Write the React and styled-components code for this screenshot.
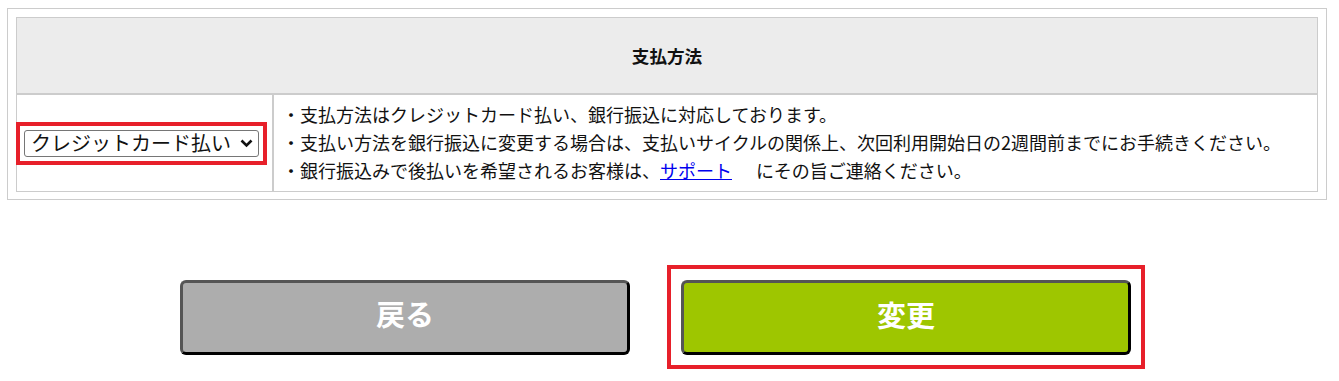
import React from 'react'
import styled, { createGlobalStyle } from 'styled-components'

const GlobalStyle = createGlobalStyle`
    body {
        margin: 0;
        background: #fff;
        color: #111;
        font-family: "Noto Sans CJK JP", "Noto Sans", sans-serif;
    }
`

const Page = styled.div`
    padding: 8px 12px 0 7px;
`

const Panel = styled.div`
    border: 1px solid #cccccc;
    padding: 8px 8px 7px 8px;
`

const Table = styled.table`
    width: 100%;
    border-collapse: collapse;
`

const HeadCell = styled.th`
    height: 75px;
    padding: 0;
    background: #ececec;
    border: 1px solid #cccccc;
    border-bottom-width: 2px;
    font-size: 17.6px;
    font-weight: bold;
    text-align: center;
`

const SelectCell = styled.td`
    width: 255px;
    padding: 0;
    border: 1px solid #cccccc;
    border-right-width: 2px;
    vertical-align: middle;
`

const NoteCell = styled.td`
    padding: 5px 8px 7px 8px;
    border: 1px solid #cccccc;
    font-size: 18px;
    line-height: 28px;
`

const Mark = styled.div`
    display: inline-block;
    border: 4px solid #e7202a;
    padding: 4px 4px 4px 4px;
    margin-left: -1px;
`

const SelectBox = styled.div`
    position: relative;
    width: 235px;
    height: 27px;
`

const Select = styled.select`
    appearance: none;
    display: block;
    width: 100%;
    height: 100%;
    padding: 0 24px 2px 6px;
    border: 1px solid #767676;
    border-radius: 3px;
    background: #fff;
    color: #111;
    font-family: "Noto Sans CJK JP", sans-serif;
    font-size: 20px;
    line-height: 24px;
`

const Chevron = styled.svg`
    position: absolute;
    right: 6px;
    top: 9px;
    pointer-events: none;
`

const Link = styled.a`
    color: #0000ee;
    text-decoration: underline;
    margin-right: 24px;
`

const Actions = styled.div`
    display: flex;
    justify-content: center;
    align-items: center;
    gap: 37px;
    margin-top: 65px;
    padding-right: 9px;
`

const Frame = styled.div`
    border: 4px solid #e7202a;
    padding: 11px 10px 10px 10px;
`

const Button = styled.button`
    display: flex;
    justify-content: center;
    align-items: center;
    width: 450px;
    height: 75px;
    padding: 0 0 8px 0;
    border: 3px solid;
    border-color: #555 #000 #000 #555;
    border-radius: 6px;
    background: ${props => props.$primary ? '#9ec600' : '#adadad'};
    color: #fff;
    font-family: "Noto Sans CJK JP", sans-serif;
    font-size: 29px;
    font-weight: bold;
    cursor: pointer;
`

const notes = [
    '・支払方法はクレジットカード払い、銀行振込に対応しております。',
    '・支払い方法を銀行振込に変更する場合は、支払いサイクルの関係上、次回利用開始日の2週間前までにお手続きください。',
]

export default function App() {
    return (
        <Page>
            <GlobalStyle />
            <Panel>
                <Table>
                    <thead>
                        <tr>
                            <HeadCell colSpan={2}>支払方法</HeadCell>
                        </tr>
                    </thead>
                    <tbody>
                        <tr>
                            <SelectCell>
                                <Mark>
                                    <SelectBox>
                                        <Select defaultValue="card">
                                            <option value="card">クレジットカード払い</option>
                                            <option value="bank">銀行振込</option>
                                        </Select>
                                        <Chevron width="13" height="9" viewBox="0 0 13 9">
                                            <path d="M1.5 1.5 L6.5 6.5 L11.5 1.5" fill="none" stroke="#111" strokeWidth="2.6" />
                                        </Chevron>
                                    </SelectBox>
                                </Mark>
                            </SelectCell>
                            <NoteCell>
                                {notes.map(note => (
                                    <div key={note}>{note}</div>
                                ))}
                                <div>
                                    ・銀行振込みで後払いを希望されるお客様は、<Link href="#">サポート</Link>にその旨ご連絡ください。
                                </div>
                            </NoteCell>
                        </tr>
                    </tbody>
                </Table>
            </Panel>
            <Actions>
                <Button>戻る</Button>
                <Frame>
                    <Button $primary>変更</Button>
                </Frame>
            </Actions>
        </Page>
    )
}
